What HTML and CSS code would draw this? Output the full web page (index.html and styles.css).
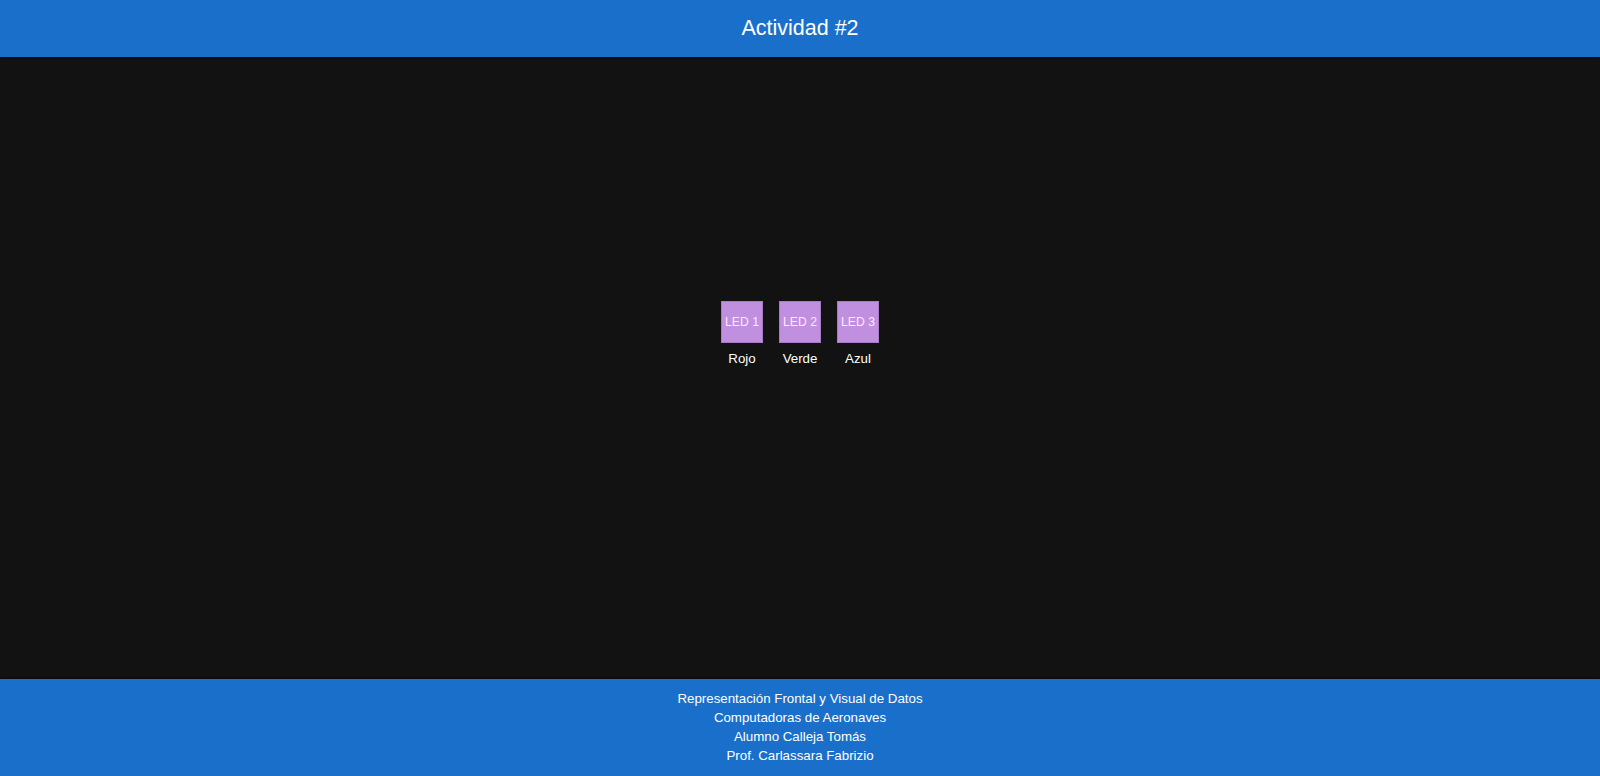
FILE: index.html
```html
<!DOCTYPE html>
<html lang="es">
<head>
<meta charset="utf-8">
<title>Actividad #2</title>
<link rel="stylesheet" href="styles.css">
</head>
<body>
<header class="top">
  <h1 class="title">Actividad #2</h1>
</header>
<main class="stage">
  <div class="leds">
    <div class="led-item">
      <div class="led">LED 1</div>
      <div class="led-label">Rojo</div>
    </div>
    <div class="led-item">
      <div class="led">LED 2</div>
      <div class="led-label">Verde</div>
    </div>
    <div class="led-item">
      <div class="led">LED 3</div>
      <div class="led-label">Azul</div>
    </div>
  </div>
</main>
<footer class="bottom">
  <div>Representación Frontal y Visual de Datos</div>
  <div>Computadoras de Aeronaves</div>
  <div>Alumno Calleja Tomás</div>
  <div>Prof. Carlassara Fabrizio</div>
</footer>
</body>
</html>
```
FILE: styles.css
```css
* { box-sizing: border-box; }
html, body { height: 100%; }
body {
  margin: 0;
  background: #121212;
  color: #ffffff;
  font-family: "Liberation Sans", Arial, sans-serif;
  display: flex;
  flex-direction: column;
}
.top {
  background: #1a6fca;
  height: 57px;
  padding-top: 15px;
  text-align: center;
  box-shadow: 0 1px 2px rgba(0,0,0,0.5);
  position: relative;
  z-index: 1;
}
.title {
  margin: 0;
  font-size: 21.5px;
  font-weight: normal;
  line-height: 26px;
}
.stage {
  flex: 1;
  display: flex;
  align-items: center;
  justify-content: center;
  padding-bottom: 68px;
}
.leds {
  display: flex;
  gap: 16px;
}
.led-item {
  display: flex;
  flex-direction: column;
  align-items: center;
}
.led {
  width: 42px;
  height: 42px;
  background: #c18fe0;
  border: 1px solid #a87cc4;
  color: #fbeaf8;
  font-size: 12.2px;
  display: flex;
  align-items: center;
  justify-content: center;
}
.led-label {
  margin-top: 8px;
  font-size: 13.3px;
  line-height: 16px;
}
.bottom {
  background: #1a6fca;
  height: 97px;
  padding-top: 10px;
  text-align: center;
  font-size: 13.3px;
  line-height: 19px;
  box-shadow: 0 -1px 2px rgba(0,0,0,0.5);
}
```
